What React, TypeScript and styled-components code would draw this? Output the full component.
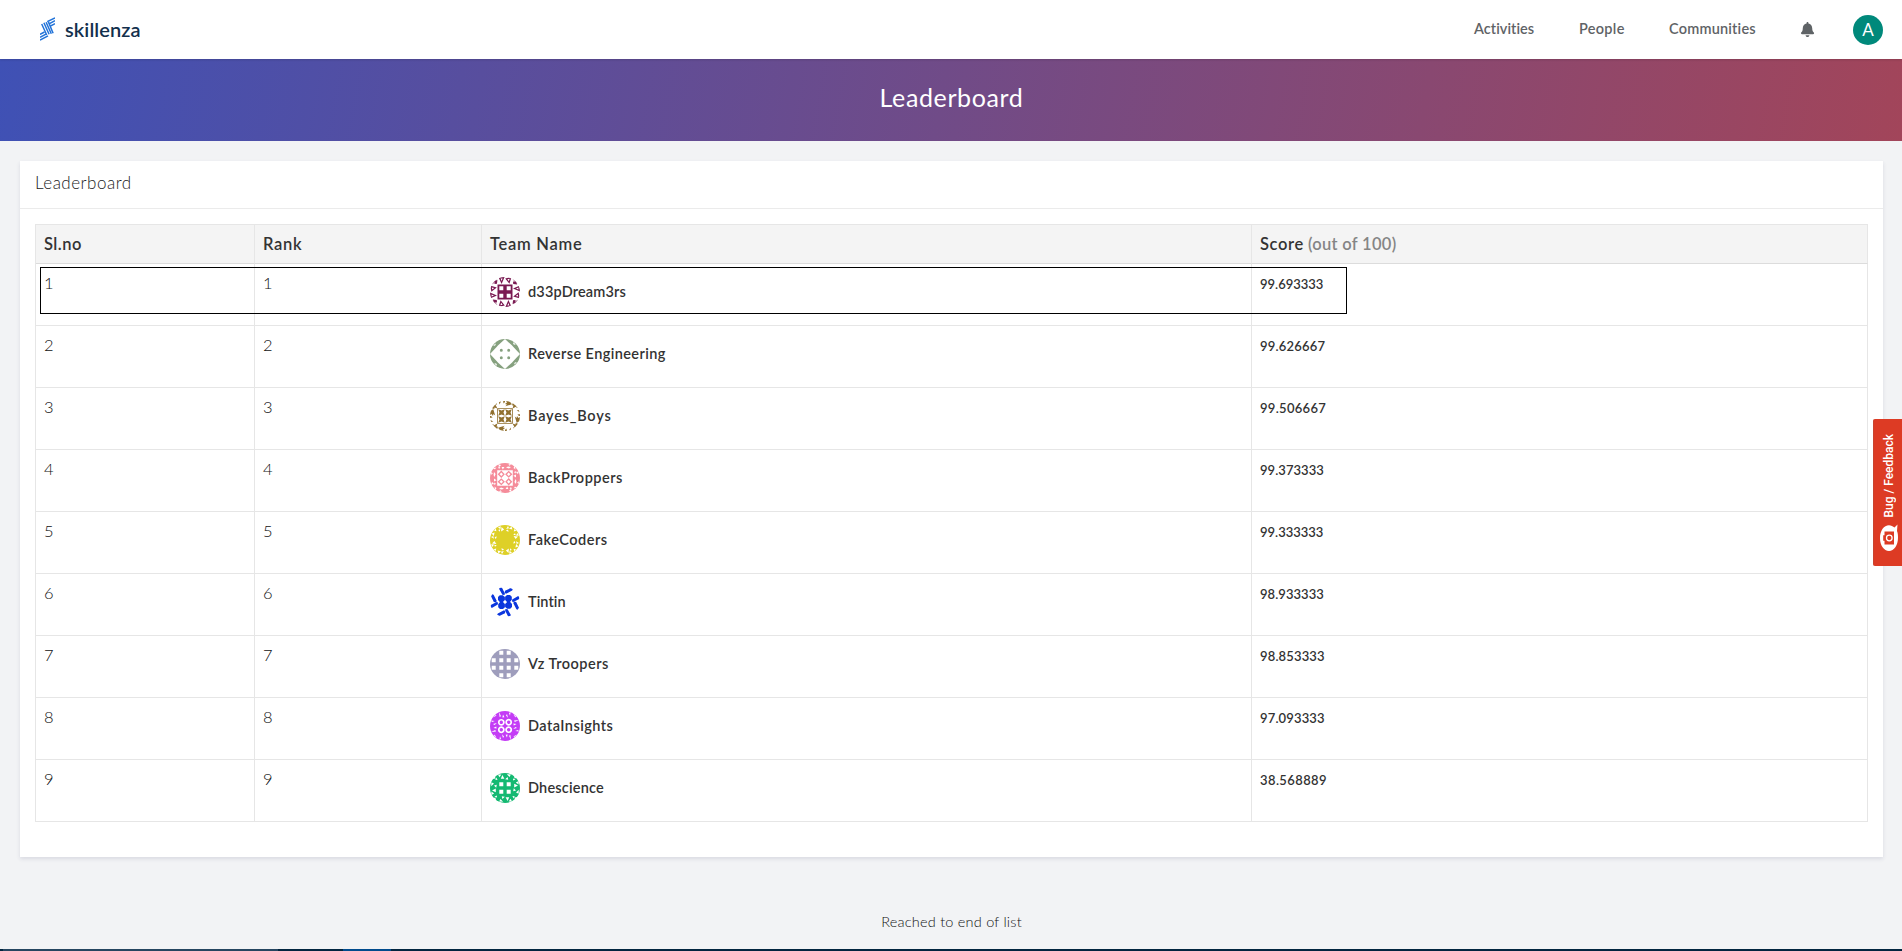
import React from 'react';
import styled, { createGlobalStyle } from 'styled-components';
import { FaBell } from 'react-icons/fa';

const GlobalStyle = createGlobalStyle`
  * { box-sizing: border-box; }
  body { margin: 0; background: #f2f3f5; }
`;

const Page = styled.div`
  height: 951px;
  display: flex;
  flex-direction: column;
  overflow: hidden;
  position: relative;
  background: #f2f3f5;
  color: #333;
  font-family: Lato, 'Liberation Sans', sans-serif;
  font-variant-ligatures: none;
`;

const Text = styled.span<{ $track?: number }>`
  letter-spacing: ${p => p.$track ?? 0}px;
  white-space: nowrap;
`;

const TopBar = styled.header`
  flex: 0 0 59px;
  display: flex;
  align-items: center;
  justify-content: space-between;
  padding: 0 19px 0 40px;
  background: #fff;
  box-shadow: 0 1px 2px rgba(0, 0, 0, 0.14);
  z-index: 1;
`;

const Brand = styled.div`
  display: flex;
  align-items: center;
  gap: 10px;
  padding-bottom: 2px;
  color: #13304d;
  font-size: 20px;
  font-weight: 600;
  line-height: 24px;
`;

const Nav = styled.nav`
  display: flex;
  align-items: center;
  color: #5f6366;
  font-size: 14.5px;
  font-weight: 600;
  line-height: 20px;
`;

const NavItem = styled.a<{ $width: number }>`
  width: ${p => p.$width}px;
  padding-bottom: 1px;
`;

const BellSlot = styled.div`
  width: 53px;
  height: 15px;
  display: flex;
`;

const UserBadge = styled.div`
  width: 30px;
  height: 30px;
  margin-top: 1px;
  border-radius: 50%;
  background: #00897b;
  color: #fff;
  display: flex;
  align-items: center;
  justify-content: center;
  font-size: 17px;
  font-weight: 400;
`;

const Banner = styled.div`
  flex: 0 0 82px;
  display: flex;
  justify-content: center;
  padding-top: 23px;
  padding-left: 1px;
  background: linear-gradient(100deg, #3f51b5, #a2455a);
  color: #fff;
  font-size: 25px;
  line-height: 30px;
`;

const Card = styled.main`
  margin: 20px 19px 0 20px;
  flex: 0 0 696px;
  background: #fff;
  box-shadow: 0 2px 4px rgba(40, 40, 90, 0.12);
`;

const CardTitle = styled.h2`
  height: 48px;
  margin: 0;
  padding: 10px 15px 0;
  border-bottom: 1px solid #ebebeb;
  color: #222;
  font-size: 17px;
  font-weight: 300;
  line-height: 23px;
`;

const CardBody = styled.div`
  padding: 15px;
`;

const Table = styled.div`
  position: relative;
  border-top: 1px solid #e6e6e6;
  border-left: 1px solid #e6e6e6;
`;

const Row = styled.div`
  display: grid;
  grid-template-columns: 219px 227px 770px 616px;
  height: 62px;
`;

const HeadRow = styled(Row)`
  height: 39px;
  background: #f4f4f4;
`;

const HeadCell = styled.div`
  padding: 7px 8px 0;
  border-right: 1px solid #e6e6e6;
  border-bottom: 1px solid #dcdcdc;
  font-size: 16.5px;
  font-weight: 600;
  line-height: 24px;
`;

const Muted = styled.span`
  margin-left: 4px;
  color: #858585;
`;

const Cell = styled.div`
  padding: 8px 8px 0;
  border-right: 1px solid #e6e6e6;
  border-bottom: 1px solid #e6e6e6;
`;

const NumberCell = styled(Cell)`
  color: #111;
  font-size: 16.5px;
  font-weight: 300;
  line-height: 23px;
`;

const TeamCell = styled(Cell)`
  display: flex;
  align-items: flex-start;
  gap: 8px;
  padding-top: 13px;
  font-size: 14.5px;
  font-weight: 600;
  line-height: 29px;
`;

const ScoreCell = styled(Cell)`
  padding-top: 9px;
  font-size: 13px;
  font-weight: 600;
  line-height: 23px;
`;

const Highlight = styled.div`
  position: absolute;
  left: 4px;
  top: 42px;
  width: 1307px;
  height: 47px;
  border: 1px solid #000;
`;

const Avatar = styled.svg`
  flex: none;
  width: 30px;
  height: 30px;
  border-radius: 50%;
`;

const EndNote = styled.div`
  flex: 1;
  padding-top: 53px;
  padding-left: 1px;
  text-align: center;
  color: #111;
  font-size: 14.5px;
  font-weight: 300;
  line-height: 23px;
`;

const Strip = styled.div`
  flex: 0 0 2px;
  display: flex;
  background: #02253f;
`;

const StripPart = styled.i<{ $width: number; $color: string }>`
  width: ${p => p.$width}px;
  background: ${p => p.$color};
`;

const FeedbackTab = styled.button`
  position: absolute;
  right: 0;
  top: 419px;
  width: 29px;
  height: 147px;
  padding: 0 4px 15px 6px;
  display: flex;
  flex-direction: column;
  align-items: center;
  justify-content: flex-end;
  gap: 6px;
  border: 0;
  border-left: 1px solid #c9432f;
  border-radius: 2px 0 0 2px;
  background: #dd3b24;
  color: #fff;
  font: 500 12px/15px Roboto, sans-serif;
`;

const FeedbackLabel = styled.span`
  writing-mode: vertical-rl;
  transform: rotate(180deg);
  white-space: nowrap;
`;

const SQUARE = 'M9.3 9.3h4v4h-4z';
const CENTER = 'M7.5 7.5H15V15H7.5z';

type Team = { name: string; track: number; score: string; scoreTrack: number; color: string; quad: string };

const teams: Team[] = [
  { name: 'd33pDream3rs', track: 0.17, score: '99.693333', scoreTrack: 0, color: '#7a1a52',
    quad: `${CENTER}${SQUARE}M8.4 0H14.6L11.6 7z M10.6 1.6h2l-1 2.4zM0 8.4L6.8 10.6 1.4 14.8zM1.8 10.4l2.4.7-1.9 1.5zM1 6.6L6.6 1l-.6 2.4 1.4-.6-.4 4-2.6.2.4-2L2.6 7.2z` },
  { name: 'Reverse Engineering', track: 0.41, score: '99.626667', scoreTrack: 0.2, color: '#86a17f',
    quad: 'M0 0H15L7.9 6.6 6.6 7.9 0 15zM3.2 7l2-.4L6 4.4 4.6 5.2zM9.8 11.3a1.5 1.5 0 1 0 3 0a1.5 1.5 0 1 0-3 0z' },
  { name: 'Bayes_Boys', track: 0.78, score: '99.506667', scoreTrack: 0.3, color: '#91702f',
    quad: 'M7.2 7.2H15V15H7.2zM8 8v7h7V8zM8.2 8.2l3.3 1.3 3.3-1.3-1.3 3.3 1.3 3.3-3.3-1.3-3.3 1.3 1.3-3.3zM0 8l1.6 1.6L3.2 8 5.2 14.6 3.4 13 3 15 1.6 13 0 14zM2 3.5L7 1v2.4L5.4 3.6 7.4 7.4 4.6 6.6 4.2 8 2 7.2zM8.8 0l.6 3.4L11 .4V0zM13 0l.6 2.6L15 1V0z' },
  { name: 'BackProppers', track: 0.48, score: '99.373333', scoreTrack: 0.05, color: '#f58c9a',
    quad: 'M0 0H15V7.2H7.2V15H0zM3 5l2 1.6L6.4 4.2 5 5zM8 1l1.5 3L11 2zM11.6 4l1.2 2.6L14.4 4zM1 9l1.8 1.2L1.4 12zM4 9l1.6 2L4.4 14 3.6 12zM8 3.6l1 2.4 1.4-1.4zM11.3 7.6l3.5 3.7-3.5 3.6-3.6-3.6zM11.3 9.6l-1.7 1.7 1.7 1.7 1.7-1.7z' },
  { name: 'FakeCoders', track: 0.49, score: '99.333333', scoreTrack: 0, color: '#ded027',
    quad: 'M0 0H15V15H0zM8 2.2l2.8-1-.4 3zM11.5 2l2.6 2.4-3 2zM8.2 5l2-.8-.4 2.6zM1.6 8.4l3-.8L3.8 11zM1 12l2.2-1 .8 2.8zM4.6 12l2.2-.6-1 2.8zM4 5.8l1.8-2.2.6 2.6z' },
  { name: 'Tintin', track: 0.08, score: '98.933333', scoreTrack: 0.05, color: '#0b36dd',
    quad: 'M9.8 8.2h3L14.9 10v3L12.9 14.9H9.8L8 13V10zM9 1.8L10.2.6 12 .8 14.9 6.6 14.5 8 12.4 7.8zM.8 8.8L2.2 7.2 3.6 7.8 6.8 14 5.8 15.4 3.8 15z' },
  { name: 'Vz Troopers', track: 0.49, score: '98.853333', scoreTrack: 0.15, color: '#9e9dbc',
    quad: `M0 0H15V15H0z${SQUARE}M9.3 1.7h4v4h-4zM1.7 9.3h4v4h-4z` },
  { name: 'DataInsights', track: 0.46, score: '97.093333', scoreTrack: 0.15, color: '#c43cf6',
    quad: 'M0 0H15V15H0zM11.3 7.9a3.4 3.4 0 1 0 .01 0zM11.3 9.6a1.7 1.7 0 1 1-.01 0zM9 1l2 4.2L9.6 6zM13 3.4l1.4 2.8-2 .4zM1 9.4l3.8.6L2 11zM3 13l3.8-1L4.6 14zM3.4 6.6l1.6-2.4 1.6-.2-1.2 1.2z' },
  { name: 'Dhescience', track: 0.19, score: '38.568889', scoreTrack: 0.4, color: '#14b972',
    quad: `M0 0H15V15H0z${SQUARE}M8 1.4h3.4l-2 2.8zM12.4 2l2 3.8h-3.6zM1.4 9.2l2.6 1.2L1.2 13.2zM4 12.4l2.8-.6-.6 3zM2.6 6l2.2-2.8.8 2.2zM6.2 4.4l1.4 2.4-2.2.2z` },
];

function TeamAvatar({ color, quad }: { color: string; quad: string }) {
  return (
    <Avatar viewBox="0 0 30 30" fill={color} fillRule="evenodd">
      {[0, 90, 180, 270].map(a => (
        <path key={a} d={quad} transform={`rotate(${a} 15 15)`} />
      ))}
    </Avatar>
  );
}

function Logo() {
  return (
    <svg width="15" height="24" viewBox="0 0 15 24" fill="none" stroke="#2273d8" strokeWidth="1.5">
      <path d="M7.2 4.6L15 .8M9 6.9l6-3.2M10.3 9.2L15 6.7" />
      <path d="M1.7 7l5 11M3.9 5.8l5.2 11.4M6.1 5.2l5.2 11.6M8.3 4.6l4.8 11.6" />
      <path d="M0 17.4L4.5 15M0 20.3l6-3.2M0 23.2l8-4.4" />
    </svg>
  );
}

function FeedbackIcon() {
  return (
    <svg width="18" height="27" viewBox="0 0 18 27">
      <path d="M9 1.2C11 1.2 13 2.2 14.5 3.6L17.5.4 17 7C17.8 9 18 11 18 13.8 18 21.5 14 27 9 27S0 21.5 0 14 4 1.2 9 1.2z" fill="#fff" />
      <path d="M4.5 7.5h9.5v13H4.5v-3.8H3.2v-5.4h1.3z" fill="#dd3b24" />
      <circle cx="9.3" cy="14" r="2.8" fill="#dd3b24" stroke="#fff" strokeWidth="1.3" />
    </svg>
  );
}

export default function App() {
  return (
    <Page>
      <GlobalStyle />
      <TopBar>
        <Brand>
          <Logo />
          <Text $track={0.1}>skillenza</Text>
        </Brand>
        <Nav>
          <NavItem $width={105}><Text $track={0.05}>Activities</Text></NavItem>
          <NavItem $width={90}><Text $track={0.3}>People</Text></NavItem>
          <NavItem $width={131}><Text $track={0.2}>Communities</Text></NavItem>
          <BellSlot><FaBell size={15} /></BellSlot>
          <UserBadge>A</UserBadge>
        </Nav>
      </TopBar>
      <Banner><Text $track={0.62}>Leaderboard</Text></Banner>
      <Card>
        <CardTitle><Text $track={0.5}>Leaderboard</Text></CardTitle>
        <CardBody>
          <Table>
            <HeadRow>
              <HeadCell><Text $track={0.5}>Sl.no</Text></HeadCell>
              <HeadCell><Text $track={0.7}>Rank</Text></HeadCell>
              <HeadCell><Text $track={0.72}>Team Name</Text></HeadCell>
              <HeadCell>
                <Text $track={0.65}>Score</Text>
                <Muted><Text $track={0.3}>(out of 100)</Text></Muted>
              </HeadCell>
            </HeadRow>
            {teams.map((t, i) => (
              <Row key={t.name}>
                <NumberCell>{i + 1}</NumberCell>
                <NumberCell>{i + 1}</NumberCell>
                <TeamCell>
                  <TeamAvatar color={t.color} quad={t.quad} />
                  <Text $track={t.track}>{t.name}</Text>
                </TeamCell>
                <ScoreCell><Text $track={t.scoreTrack}>{t.score}</Text></ScoreCell>
              </Row>
            ))}
            <Highlight />
          </Table>
        </CardBody>
      </Card>
      <EndNote><Text $track={0.22}>Reached to end of list</Text></EndNote>
      <Strip>
        <StripPart $width={3} $color="#02253f" />
        <StripPart $width={275} $color="#254560" />
        <StripPart $width={65} $color="#02253f" />
        <StripPart $width={48} $color="#004b8d" />
      </Strip>
      <FeedbackTab>
        <FeedbackLabel>Bug / Feedback</FeedbackLabel>
        <FeedbackIcon />
      </FeedbackTab>
    </Page>
  );
}
